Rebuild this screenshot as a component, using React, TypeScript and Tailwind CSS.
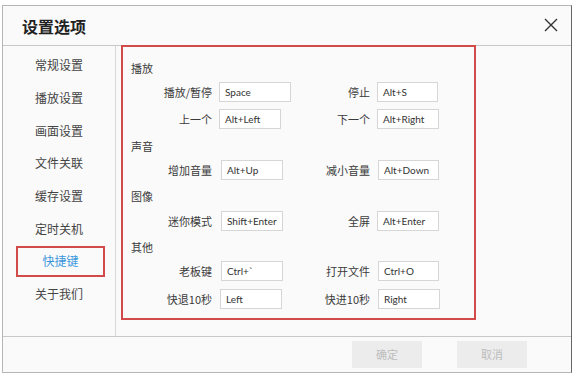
import { useState } from "react";

const menu = ["常规设置", "播放设置", "画面设置", "文件关联", "缓存设置", "定时关机", "快捷键", "关于我们"];

type Key = { label: string; value: string; w: number; gap?: number };

const Field = ({ label, value, w, gap = 7, lw }: Key & { lw: number }) => (
  <div className="flex items-center">
    <div className="text-right text-[11px] text-[#3a3a3a]" style={{ width: lw }}>
      {label}
    </div>
    <div
      className="h-[20px] border border-[#d6d6d6] bg-white pl-[5px] text-[10px] leading-[18px] text-[#333] font-['Lato','Open_Sans',sans-serif]"
      style={{ width: w, marginLeft: gap }}
    >
      {value}
    </div>
  </div>
);

const Row = ({ left, right, mt }: { left: Key; right: Key; mt: string }) => (
  <div className={`grid h-[20px] grid-cols-[177px_auto] items-center ${mt}`}>
    <Field {...left} lw={89} />
    <Field {...right} lw={70} />
  </div>
);

const Section = ({ title, mt }: { title: string; mt: string }) => (
  <div className={`h-[16px] pl-[8px] text-[11px] leading-[16px] text-[#3a3a3a] ${mt}`}>{title}</div>
);

export default function App() {
  const [active] = useState(6);
  return (
    <div className="w-[576px] h-[378px] bg-white pt-[5px] pl-[2px] font-['Noto_Sans_CJK_SC',sans-serif]">
      <div className="flex h-[368px] w-[570px] flex-col border border-[#b5b5b5] border-r-[#666] bg-[#fafafa]">
        <header className="flex h-[40px] shrink-0 items-center justify-between border-b border-[#c8c8c8] pl-[19px] pr-[13px]">
          <h1 className="text-[16px] font-bold text-[#222]">设置选项</h1>
          <svg width="14" height="14" viewBox="0 0 14 14" className="mt-[-2px]">
            <path d="M1 1L13 13M13 1L1 13" stroke="#333" strokeWidth="1.4" />
          </svg>
        </header>
        <div className="flex flex-1">
          <nav className="w-[113px] shrink-0 border-r border-[#d8d8d8] pt-[3px]">
            {menu.map((m, i) => (
              <div key={m} className="flex h-[32.7px] items-center justify-center">
                {i === active ? (
                  <div className="ml-[3px] flex h-[31px] w-[89px] items-center justify-center border-2 border-[#d24b4b] text-[12px] text-[#3a97dd]">
                    {m}
                  </div>
                ) : (
                  <span className="text-[12px] text-[#444]">{m}</span>
                )}
              </div>
            ))}
          </nav>
          <div className="flex-1 pl-[5px]">
            <div className="mt-[-1px] h-[275px] w-[355px] border-2 border-[#d24b4b] pt-[13px]">
              <Section title="播放" mt="" />
              <Row mt="mt-[6px]" left={{ label: "播放/暂停", value: "Space", w: 72 }} right={{ label: "停止", value: "Alt+S", w: 61 }} />
              <Row mt="mt-[7px]" left={{ label: "上一个", value: "Alt+Left", w: 62 }} right={{ label: "下一个", value: "Alt+Right", w: 62 }} />
              <Section title="声音" mt="mt-[9px]" />
              <Row mt="mt-[6px]" left={{ label: "增加音量", value: "Alt+Up", w: 62, gap: 9 }} right={{ label: "减小音量", value: "Alt+Down", w: 61, gap: 8 }} />
              <Section title="图像" mt="mt-[8px]" />
              <Row mt="mt-[7px]" left={{ label: "迷你模式", value: "Shift+Enter", w: 62, gap: 9 }} right={{ label: "全屏", value: "Alt+Enter", w: 62 }} />
              <Section title="其他" mt="mt-[8px]" />
              <Row mt="mt-[6px]" left={{ label: "老板键", value: "Ctrl+`", w: 62, gap: 9 }} right={{ label: "打开文件", value: "Ctrl+O", w: 61, gap: 8 }} />
              <Row mt="mt-[8px]" left={{ label: "快退10秒", value: "Left", w: 62, gap: 8 }} right={{ label: "快进10秒", value: "Right", w: 62, gap: 8 }} />
            </div>
          </div>
        </div>
        <footer className="flex h-[36px] shrink-0 items-center gap-[35px] border-t border-[#c8c8c8] pl-[349px]">
          <button className="h-[27px] w-[70px] bg-[#ececec] text-[11px] text-[#bdbdbd]">确定</button>
          <button className="h-[27px] w-[70px] bg-[#ececec] text-[11px] text-[#bdbdbd]">取消</button>
        </footer>
      </div>
    </div>
  );
}
